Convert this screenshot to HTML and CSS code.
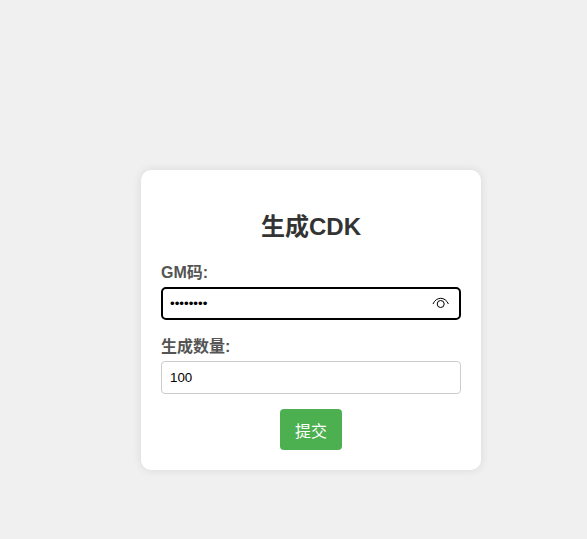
FILE: index.html
```html
<!DOCTYPE html>
<html lang="zh-CN">
<head>
    <meta charset="UTF-8">
    <meta name="viewport" content="width=device-width, initial-scale=1.0">
    <title>生成CDK</title>
    <link rel="stylesheet" href="styles.css">
</head>
<body>

    <div class="container">
        <h2>生成CDK</h2>
        <form class="cdk-form">
            <label for="gmCode">GM码:</label>
            <div class="password-wrap">
                <input type="password" id="gmCode" class="active-input" value="12345678">
                <svg class="eye-icon" viewBox="0 0 18 12" width="18" height="12" fill="none" stroke="#000" stroke-width="1">
                    <path d="M1 7C2.600 3.200 5.500 1.300 8.700 1.300S14.800 3.200 16.400 7"/>
                    <circle cx="8.700" cy="7" r="3.500"/>
                </svg>
            </div>
            <label for="amount">生成数量:</label>
            <input type="text" id="amount" value="100">
            <button type="button" class="submit-btn">提交</button>
        </form>
    </div>

</body>
</html>
```

FILE: styles.css
```css
body {
    font-family: "Liberation Sans", Arial, "Noto Sans CJK SC", sans-serif;
    margin: 0;
    min-height: 100vh;
    background-color: #f0f0f0;
    overflow: hidden;
}
.container {
    box-sizing: border-box;
    width: 340px;
    height: 300px;
    margin: 170px 0 0 141px;
    padding: 20px;
    background: #fff;
    border-radius: 10px;
    box-shadow: 0 0 10px rgba(0, 0, 0, 0.1);
}
h2 {
    margin: 20px 0;
    font-size: 24px;
    line-height: 34px;
    text-align: center;
    color: #333;
}
.cdk-form {
    display: flex;
    flex-direction: column;
}
label {
    margin-bottom: 5px;
    font-size: 16px;
    line-height: 18px;
    font-weight: bold;
    color: #555;
}
input {
    box-sizing: border-box;
    width: 100%;
    height: 33px;
    margin-bottom: 18px;
    padding: 8px;
    border: 1px solid #ccc;
    border-radius: 4px;
    font-family: inherit;
    font-size: 13.33px;
    color: #000;
    outline: none;
}
.active-input {
    border: 2px solid #000;
    border-radius: 5px;
    padding: 8px 7px;
}
.password-wrap {
    position: relative;
    display: flex;
}
.eye-icon {
    position: absolute;
    top: 10px;
    right: 11px;
}
.submit-btn {
    align-self: center;
    height: 41px;
    margin-top: -3px;
    padding: 0 15px;
    border: none;
    border-radius: 4px;
    background: #4caf50;
    color: #fff;
    font-family: inherit;
    font-size: 16px;
    cursor: pointer;
}
```
